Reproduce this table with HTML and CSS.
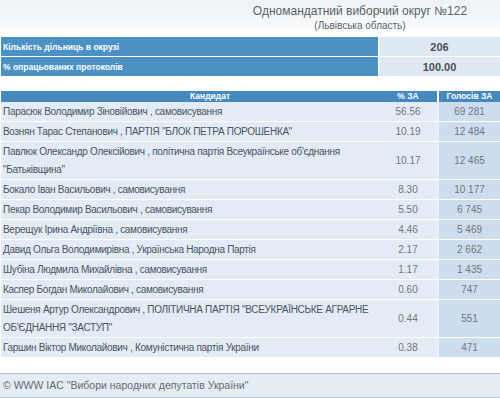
FILE: index.html
```html
<!DOCTYPE html>
<html lang="uk">
<head>
<meta charset="utf-8">
<title>Одномандатний виборчий округ №122</title>
<link rel="stylesheet" href="styles.css">
</head>
<body>
<div class="page">
  <header class="head">
    <div class="head-text">
      <div class="title">Одномандатний виборчий округ №122</div>
      <div class="subtitle">(Львівська область)</div>
    </div>
  </header>

  <table class="summary">
    <tr><th>Кількість дільниць в окрузі</th><td>206</td></tr>
    <tr><th>% опрацьованих протоколів</th><td>100.00</td></tr>
  </table>

  <table class="results">
    <colgroup>
      <col class="col-name">
      <col class="col-pct">
      <col class="col-votes">
    </colgroup>
    <thead>
      <tr><th class="c-name">Кандидат</th><th class="c-pct">% ЗА</th><th class="c-votes">Голосів ЗА</th></tr>
    </thead>
    <tbody>
      <tr><td class="c-name">Парасюк Володимир Зіновійович , самовисування</td><td class="c-pct">56.56</td><td class="c-votes">69 281</td></tr>
      <tr><td class="c-name">Вознян Тарас Степанович , ПАРТІЯ "БЛОК ПЕТРА ПОРОШЕНКА"</td><td class="c-pct">10.19</td><td class="c-votes">12 484</td></tr>
      <tr><td class="c-name">Павлюк Олександр Олексійович , політична партія Всеукраїнське об'єднання "Батьківщина"</td><td class="c-pct">10.17</td><td class="c-votes">12 465</td></tr>
      <tr><td class="c-name">Бокало Іван Васильович , самовисування</td><td class="c-pct">8.30</td><td class="c-votes">10 177</td></tr>
      <tr><td class="c-name">Пекар Володимир Васильович , самовисування</td><td class="c-pct">5.50</td><td class="c-votes">6 745</td></tr>
      <tr><td class="c-name">Верещук Ірина Андріївна , самовисування</td><td class="c-pct">4.46</td><td class="c-votes">5 469</td></tr>
      <tr><td class="c-name">Давид Ольга Володимирівна , Українська Народна Партія</td><td class="c-pct">2.17</td><td class="c-votes">2 662</td></tr>
      <tr><td class="c-name">Шубіна Людмила Михайлівна , самовисування</td><td class="c-pct">1.17</td><td class="c-votes">1 435</td></tr>
      <tr><td class="c-name">Каспер Богдан Миколайович , самовисування</td><td class="c-pct">0.60</td><td class="c-votes">747</td></tr>
      <tr><td class="c-name">Шешеня Артур Олександрович , ПОЛІТИЧНА ПАРТІЯ "ВСЕУКРАЇНСЬКЕ АГРАРНЕ ОБ'ЄДНАННЯ "ЗАСТУП"</td><td class="c-pct">0.44</td><td class="c-votes">551</td></tr>
      <tr><td class="c-name">Гаршин Віктор Миколайович , Комуністична партія України</td><td class="c-pct">0.38</td><td class="c-votes">471</td></tr>
    </tbody>
  </table>

  <footer class="foot">© WWW IAC "Вибори народних депутатів України"</footer>
</div>
</body>
</html>
```

FILE: styles.css
```css
html, body {
  margin: 0;
  padding: 0;
  background: #ffffff;
}

.page {
  width: 500px;
  font-family: "Liberation Sans", Arial, sans-serif;
  color: #4b5663;
}

.head {
  height: 36px;
  background: linear-gradient(#eef2f6, #f6f8fa 60%, #ffffff);
  display: flex;
  justify-content: center;
  padding-left: 220px;
  box-sizing: border-box;
}

.head-text {
  display: flex;
  flex-direction: column;
  align-items: center;
  padding-top: 4px;
}

.title {
  font-size: 12px;
  line-height: 15px;
  color: #5a6168;
}

.subtitle {
  font-size: 10px;
  line-height: 13px;
  color: #5a6168;
}

.summary {
  margin-left: 1px;
  width: 499px;
  border-collapse: separate;
  border-spacing: 0 1px;
}

.summary th {
  width: 375px;
  height: 19px;
  padding: 0 0 0 2px;
  background: #4b91c4;
  color: #ffffff;
  font-size: 8.5px;
  font-weight: bold;
  text-align: left;
  border-right: 1px solid #ffffff;
}

.summary td {
  height: 19px;
  padding: 0;
  background: #dfe9f3;
  color: #4a4f55;
  font-size: 11px;
  font-weight: bold;
  text-align: center;
}

.results {
  margin: 14px 0 0 1px;
  width: 499px;
  border-collapse: collapse;
  table-layout: fixed;
}

.col-name { width: 372px; }
.col-pct { width: 65px; }
.col-votes { width: 62px; }

.results th {
  height: 11px;
  padding: 0;
  background: #4689bf;
  color: #ffffff;
  font-size: 8.5px;
  line-height: 11px;
  font-weight: bold;
}

.results th.c-name {
  text-align: left;
  padding-left: 189px;
}

.results th.c-pct {
  text-align: center;
  padding-left: 6px;
}

.results th.c-votes {
  border-left: 2px solid #ffffff;
  text-align: center;
}

.results td {
  padding: 1px 2px 0 2px;
  background: #e3ecf5;
  font-size: 10px;
  line-height: 18px;
  border-bottom: 1px solid #ffffff;
  vertical-align: middle;
}

.results td.c-name {
  padding-right: 2px;
  letter-spacing: -0.3px;
  color: #4a5461;
}

.results td.c-pct {
  text-align: center;
  color: #70767d;
  padding-left: 8px;
}

.results td.c-votes {
  text-align: center;
  background: #cedded;
  color: #70767d;
  border-left: 2px solid #eef3f8;
}

.foot {
  margin-top: 15px;
  height: 23px;
  background: #e4ecf4;
  border-top: 1px solid #a9bccd;
  border-bottom: 1px solid #b7c7d5;
  font-size: 10.5px;
  line-height: 23px;
  padding-left: 3px;
  color: #666c72;
}
```
